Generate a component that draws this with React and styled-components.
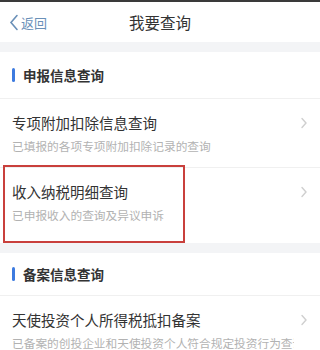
import React from "react";
import styled, { createGlobalStyle } from "styled-components";

const GlobalStyle = createGlobalStyle`
  body {
    margin: 0;
    background: #f3f4f6;
    font-family: "Noto Sans CJK SC", "Noto Sans", sans-serif;
  }
`;

const Page = styled.div`
  width: 320px;
  height: 350px;
  overflow: hidden;
  background: #f3f4f6;
`;

const TopStrip = styled.div`
  height: 2px;
  background: #3a3a3a;
`;

const NavBar = styled.header`
  position: relative;
  height: 40px;
  background: #fff;
  display: flex;
  align-items: center;
  justify-content: center;
`;

const Back = styled.div`
  position: absolute;
  left: 9px;
  top: 0;
  bottom: 0;
  display: flex;
  align-items: center;
  gap: 2px;
  color: #6a90b8;
  font-size: 13px;
`;

const Title = styled.h1`
  margin: 0;
  font-size: 15.5px;
  font-weight: 400;
  color: #333;
`;

const Section = styled.section`
  margin-top: 10px;
  background: #fff;
`;

const SectionHead = styled.div`
  height: ${(p) => p.$h || 46}px;
  display: flex;
  align-items: center;
  gap: 8px;
  padding-left: 12px;
  border-bottom: 1px solid #f0f0f0;
  font-size: 13.5px;
  font-weight: 700;
  color: #333;

  &::before {
    content: "";
    width: 3px;
    height: 14px;
    border-radius: 2px;
    background: #3d7be0;
  }
`;

const Row = styled.div`
  position: relative;
  display: flex;
  align-items: flex-start;
  padding: 13px 12px ${(p) => (p.$last ? 19 : 12)}px 12px;
  border-bottom: ${(p) => (p.$last ? "none" : "1px solid #f0f0f0")};
`;

const RowText = styled.div`
  flex: 1;
  min-width: 0;
`;

const RowTitle = styled.div`
  font-size: 14.5px;
  line-height: 22px;
  color: #333;
`;

const RowSub = styled.div`
  margin-top: 3px;
  font-size: 11.7px;
  line-height: 18px;
  color: #b2b2b2;
  white-space: nowrap;
  overflow: hidden;
`;

const Highlight = styled.div`
  position: absolute;
  left: 3px;
  top: -3px;
  width: 182px;
  height: 78px;
  box-sizing: border-box;
  border: 2px solid #c9403c;
  pointer-events: none;
`;

const ChevronBox = styled.span`
  flex-shrink: 0;
  display: flex;
  margin: 5px 0 0 6px;
`;

const Chevron = () => (
  <ChevronBox>
    <svg width="8" height="12" viewBox="0 0 8 12">
      <path d="M2 1.5 L6 6 L2 10.5" fill="none" stroke="#cfcfcf" strokeWidth="1.4" strokeLinecap="round" />
    </svg>
  </ChevronBox>
);

const BackArrow = () => (
  <svg width="10" height="17" viewBox="0 0 10 17">
    <path d="M8 1.5 L2 8.5 L8 15.5" fill="none" stroke="#6a90b8" strokeWidth="1.6" strokeLinecap="round" />
  </svg>
);

const Item = ({ title, sub, highlight, last }) => (
  <Row $last={last}>
    {highlight && <Highlight />}
    <RowText>
      <RowTitle>{title}</RowTitle>
      <RowSub>{sub}</RowSub>
    </RowText>
    <Chevron />
  </Row>
);

export default function App() {
  return (
    <Page>
      <GlobalStyle />
      <TopStrip />
      <NavBar>
        <Back>
          <BackArrow />
          <span>返回</span>
        </Back>
        <Title>我要查询</Title>
      </NavBar>
      <Section>
        <SectionHead>申报信息查询</SectionHead>
        <Item title="专项附加扣除信息查询" sub="已填报的各项专项附加扣除记录的查询" />
        <Item title="收入纳税明细查询" sub="已申报收入的查询及异议申诉" highlight last />
      </Section>
      <Section>
        <SectionHead $h={42}>备案信息查询</SectionHead>
        <Item title="天使投资个人所得税抵扣备案" sub="已备案的创投企业和天使投资个人符合规定投资行为查询" last />
      </Section>
    </Page>
  );
}
